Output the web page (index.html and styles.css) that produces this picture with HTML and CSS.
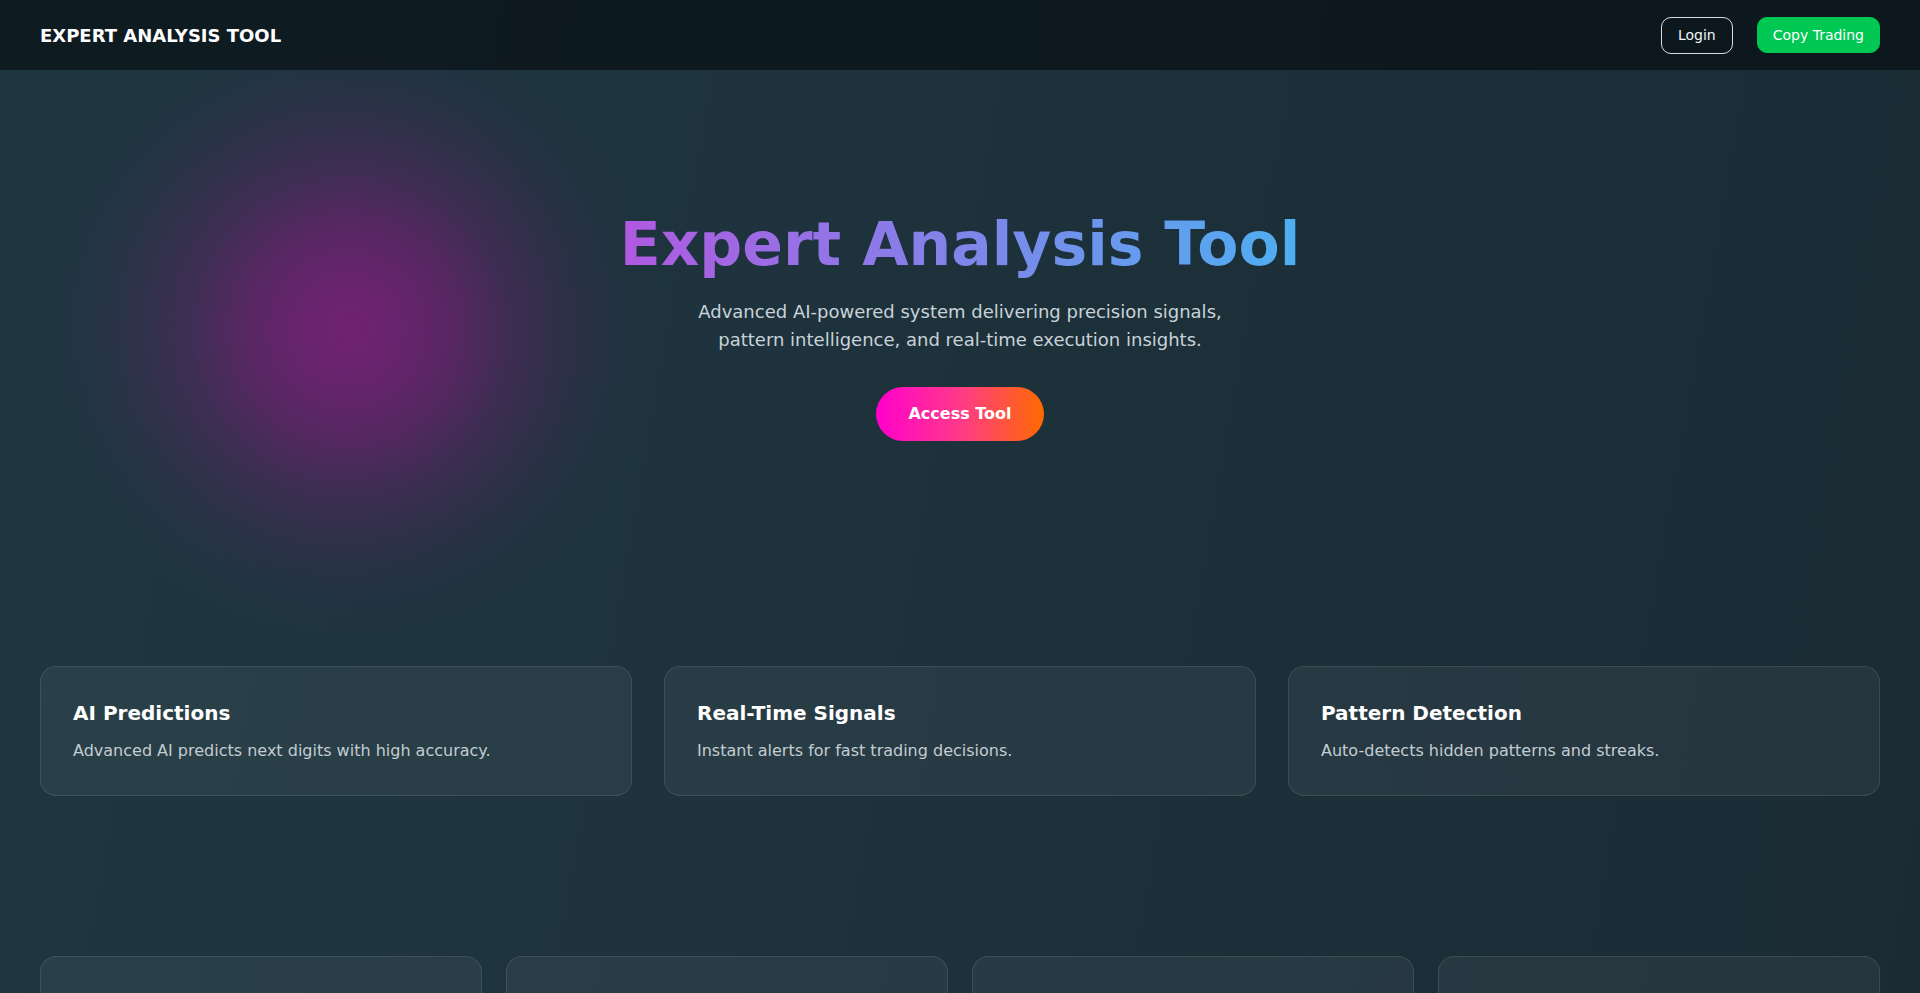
FILE: index.html
```html
<!DOCTYPE html>
<html lang="en">
<head>
<meta charset="utf-8">
<title>Expert Analysis Tool</title>
<link rel="stylesheet" href="styles.css">
</head>
<body>
<div class="page">
  <div class="glow"></div>
  <header class="topbar">
    <div class="logo">EXPERT ANALYSIS TOOL</div>
    <nav class="actions">
      <a class="btn btn-outline" href="#">Login</a>
      <a class="btn btn-green" href="#">Copy Trading</a>
    </nav>
  </header>

  <section class="hero">
    <h1 class="hero-title"><span>Expert Analysis Tool</span></h1>
    <p class="hero-sub">Advanced AI-powered system delivering precision signals, pattern intelligence, and real-time execution insights.</p>
    <a class="btn-access" href="#">Access Tool</a>
  </section>

  <section class="features">
    <div class="card">
      <h3>AI Predictions</h3>
      <p>Advanced AI predicts next digits with high accuracy.</p>
    </div>
    <div class="card">
      <h3>Real-Time Signals</h3>
      <p>Instant alerts for fast trading decisions.</p>
    </div>
    <div class="card">
      <h3>Pattern Detection</h3>
      <p>Auto-detects hidden patterns and streaks.</p>
    </div>
  </section>

  <section class="stats">
    <div class="stat-card"></div>
    <div class="stat-card"></div>
    <div class="stat-card"></div>
    <div class="stat-card"></div>
  </section>
</div>
</body>
</html>
```

FILE: styles.css
```css
* { box-sizing: border-box; }

html, body {
  margin: 0;
  padding: 0;
}

body {
  font-family: "DejaVu Sans", "Noto Sans", sans-serif;
  color: #ffffff;
  background: linear-gradient(100deg, #1f3741 0%, #1d313b 50%, #1a2b34 100%);
  min-height: 100vh;
}

.page {
  position: relative;
  overflow: hidden;
}

.glow {
  position: absolute;
  left: 40px;
  top: 20px;
  width: 620px;
  height: 620px;
  border-radius: 50%;
  background: radial-gradient(circle closest-side,
    rgba(255, 0, 204, 0.36) 0%,
    rgba(255, 0, 204, 0.33) 16%,
    rgba(255, 0, 204, 0.25) 34%,
    rgba(255, 0, 204, 0.14) 52%,
    rgba(255, 0, 204, 0.06) 72%,
    rgba(255, 0, 204, 0.015) 88%,
    rgba(255, 0, 204, 0) 100%);
  pointer-events: none;
}

.topbar {
  position: relative;
  height: 70px;
  padding: 0 40px;
  display: flex;
  align-items: center;
  justify-content: space-between;
  background: rgba(4, 10, 14, 0.6);
}

.logo {
  font-size: 18px;
  font-weight: bold;
  color: #ffffff;
}

.actions {
  display: flex;
  align-items: center;
  gap: 24px;
}

.btn {
  display: inline-block;
  font-size: 14px;
  line-height: 19px;
  padding: 8px 16px;
  border-radius: 10px;
  text-decoration: none;
  color: #ffffff;
  border: 1px solid transparent;
}

.btn-outline {
  border-color: rgba(255, 255, 255, 0.85);
  color: #f0f4f6;
}

.btn-green {
  background: #00c853;
  border-color: #00c853;
  padding: 8px 15px 7px;
}

.hero {
  position: relative;
  padding: 139px 40px 145px;
  display: flex;
  flex-direction: column;
  align-items: center;
  text-align: center;
}

.hero-title {
  margin: 0;
  font-size: 60px;
  line-height: 70px;
  font-weight: bold;
}

.hero-title span {
  display: inline-block;
  background: linear-gradient(90deg, #b159e0 0%, #8a7ce8 40%, #4eaff1 100%);
  -webkit-background-clip: text;
  background-clip: text;
  color: transparent;
}

.hero-sub {
  margin: 19px 0 0;
  max-width: 560px;
  font-size: 18px;
  line-height: 28px;
  color: #c9d2d8;
}

.btn-access {
  margin-top: 33px;
  display: inline-block;
  padding: 16px 32px;
  font-size: 16px;
  line-height: 22px;
  font-weight: bold;
  color: #ffffff;
  text-decoration: none;
  border-radius: 999px;
  background: linear-gradient(90deg, #ff00cc 0%, #ff3a88 50%, #ff6a00 100%);
}

.features {
  position: relative;
  padding: 80px 40px;
  display: grid;
  grid-template-columns: repeat(3, 1fr);
  gap: 32px;
}

.card {
  background: rgba(255, 255, 255, 0.05);
  border: 1px solid rgba(255, 255, 255, 0.1);
  border-radius: 16px;
  padding: 34px 32px 32px;
}

.card h3 {
  margin: 0 0 13px;
  font-size: 20px;
  line-height: 24px;
  font-weight: bold;
  color: #ffffff;
}

.card p {
  margin: 0;
  font-size: 16px;
  line-height: 25px;
  color: #c3ccd2;
}

.stats {
  position: relative;
  padding: 80px 40px;
  display: grid;
  grid-template-columns: repeat(4, 1fr);
  gap: 24px;
}

.stat-card {
  min-height: 200px;
  background: rgba(255, 255, 255, 0.05);
  border: 1px solid rgba(255, 255, 255, 0.1);
  border-radius: 16px;
}
```
